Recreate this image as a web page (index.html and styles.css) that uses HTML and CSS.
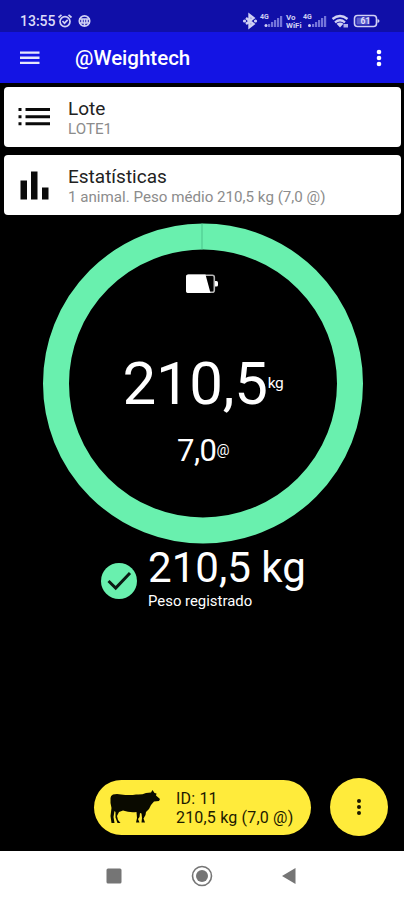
FILE: index.html
```html
<!DOCTYPE html>
<html lang="pt-BR">
<head>
    <meta charset="UTF-8">
    <meta name="viewport" content="width=device-width, initial-scale=1.0">
    <title>@Weightech</title>
    <link rel="stylesheet" href="styles.css">
</head>
<body>
  <div class="screen">
    <!-- Status bar -->
    <div class="status-bar">
        <span class="clock">13:55</span>
        <svg class="status-left" width="36" height="16" viewBox="0 0 36 16" fill="none" stroke="#d0d0f4" stroke-width="1.7">
            <circle cx="8" cy="8.600" r="5"/>
            <path d="M1.500 4.500L4.500 1.800M14.500 4.500L11.500 1.800M5.500 8l2 2.200 3.200-3.400"/>
            <circle cx="27.500" cy="8" r="5.200"/>
            <path d="M22 6h11M22 10h11M27.500 6v7M25 6v4M30 6v4"/>
        </svg>
        <svg class="status-right" width="138" height="18" viewBox="0 0 138 18">
            <path d="M4 6l7.500 6-4 3v-12l4 3L4 12" fill="none" stroke="#d0d0f4" stroke-width="2.400"/>
            <g fill="#d0d0f4">
                <circle cx="2.500" cy="9" r="1.600"/>
                <circle cx="13.500" cy="9" r="1.600"/>
                <text class="tiny" x="18" y="7">4G</text>
                <text class="tiny vo" x="44" y="8">Vo</text>
                <text class="tiny vo" x="44" y="15.500" textLength="15.500" lengthAdjust="spacingAndGlyphs">WiFi</text>
                <text class="tiny" x="61" y="7">4G</text>
                <circle cx="24" cy="13.500" r="1.500"/>
                <circle cx="67.500" cy="13.500" r="1.500"/>
            </g>
            <g fill="#7474da">
                <path d="M26 12h2.200v3H26zM29 10h2.200v5H29zM32 8h2.200v7H32zM35 6h2.200v9H35zM38 4h2.200v11H38z"/>
                <path d="M70 12h2.200v3H70zM73 10h2.200v5H73zM76 8h2.200v7H76zM79 6h2.200v9H79zM82 4h2.200v11H82z"/>
            </g>
            <g fill="none" stroke="#d0d0f4" stroke-width="2.300">
                <path d="M90.500 7q7.500-6 15 0M93 10.300q5-4 10 0"/>
                <rect x="112.500" y="3.500" width="22" height="11" rx="3" stroke-width="1.600"/>
            </g>
            <path d="M94.500 11.800q3.500-2.600 7 0L98 15.500z" fill="#d0d0f4"/>
            <path d="M101.500 12h4.500v3.500h-4.500z" fill="#b0b0ea"/>
            <path d="M135.500 7q2 .5 2 2t-2 2z" fill="#d0d0f4"/>
            <rect x="114.500" y="5.500" width="13" height="7" fill="#5c5ccb"/>
            <text class="level" x="118.500" y="12.200" fill="#e0e0fa">61</text>
        </svg>
    </div>

    <!-- App bar -->
    <div class="app-bar">
        <svg class="menu" width="20" height="14" viewBox="0 0 20 14" fill="#e6e6fb">
            <path d="M0 .5h19.500v2.300H0zM0 5.600h19.500v2.300H0zM0 10.800h19.500v2.300H0z"/>
        </svg>
        <h1>@Weightech</h1>
        <svg class="more" width="6" height="18" viewBox="0 0 6 18" fill="#fff">
            <circle cx="3" cy="3" r="2.300"/>
            <circle cx="3" cy="9" r="2.300"/>
            <circle cx="3" cy="15" r="2.300"/>
        </svg>
    </div>

    <!-- Cards -->
    <div class="cards">
        <div class="card">
            <svg width="32" height="32" viewBox="0 0 32 32" fill="#0a0a0a">
                <path d="M.500 7h3v3h-3zM.500 14.200h3v3h-3zM.500 21.200h3v3h-3zM7.500 7h24.500v3H7.500zM7.500 14.200h24.500v3H7.500zM7.500 21.200h24.500v3H7.500z"/>
            </svg>
            <div class="card-text">
                <h2>Lote</h2>
                <p>LOTE1</p>
            </div>
        </div>
        <div class="card">
            <svg width="32" height="32" viewBox="0 0 32 32" fill="#0a0a0a">
                <path d="M2.500 11.500h6.500v19H2.500zM13 2.500h6.500v28H13zM24 18.500h6.500v12H24z"/>
            </svg>
            <div class="card-text">
                <h2>Estatísticas</h2>
                <p>1 animal. Peso médio 210,5 kg (7,0 @)</p>
            </div>
        </div>
    </div>

    <!-- Scale reading -->
    <svg class="ring" width="320" height="321" viewBox="0 0 320 321">
        <circle cx="160" cy="160.500" r="147" fill="none" stroke="#69f0ae" stroke-width="26"/>
        <path d="M159 .5v26" stroke="#4cc48c"/>
    </svg>
    <div class="reading">
        <svg class="battery" width="32" height="20" viewBox="0 0 32 20">
            <rect x=".8" y="1.300" width="27.500" height="17" rx="2" fill="none" stroke="#b5b5b5" stroke-width="1.600"/>
            <path d="M2 .5h17.500l5 18.500H2q-2 0-2-2v-14.500q0-2 2-2z" fill="#fff"/>
            <path d="M29 7h1.500q1.500 0 1.500 1.500v2.500q0 1.500-1.500 1.500H29z" fill="#fff"/>
        </svg>
        <div class="weight">210,5<span>kg</span></div>
        <div class="arroba">7,0<span>@</span></div>
    </div>

    <!-- Registered weight -->
    <div class="registered">
        <svg class="check" width="36" height="36" viewBox="0 0 36 36">
            <circle cx="18" cy="18" r="18" fill="#69f0ae"/>
            <path d="M7.500 18l7.200 7L29 10" fill="none" stroke="#0a1a12" stroke-width="3"/>
        </svg>
        <div>
            <div class="registered-value">210,5 kg</div>
            <div class="registered-label">Peso registrado</div>
        </div>
    </div>

    <!-- Animal and actions -->
    <div class="actions">
        <div class="animal">
            <svg width="50" height="34" viewBox="0 0 50 34" fill="#0a0a00">
                <path d="M3 4.500Q7 3.500 11 4.500Q20 5.500 26 4.500Q32 5 36 3L41 2.500L42.500 0L44.500 3L46.500 3.500L46 5.500L50 9L49 11L44 11.500L41 15L39 19L36 22L35.500 25L33.500 28.500L35 32.500H31.500L32 28L31.500 23.500L30 23L29.500 27L28 29L29.500 32.500H26L27 28L26.500 22Q20 23 13 20.500L9 22L7 26L8 30L10.500 33H7.500L5.500 27.500V22L4.500 21L3.500 27L4.500 33H1.500L.500 26L1.500 18L.500 13V8Q.500 5.500 3 4.500z"/>
            </svg>
            <div class="animal-text">ID: 11<br>210,5 kg (7,0 @)</div>
        </div>
        <div class="fab">
            <svg width="6" height="18" viewBox="0 0 6 18" fill="#1a1800">
                <circle cx="3" cy="3" r="2"/>
                <circle cx="3" cy="9" r="2"/>
                <circle cx="3" cy="15" r="2"/>
            </svg>
        </div>
    </div>

    <!-- System navigation -->
    <div class="nav-bar">
        <svg width="16" height="16" viewBox="0 0 16 16"><rect x=".5" y=".5" width="15" height="15" rx="1.500" fill="#757575"/></svg>
        <svg width="22" height="22" viewBox="0 0 22 22">
            <circle cx="11" cy="11" r="9.500" fill="none" stroke="#757575" stroke-width="1.600"/>
            <circle cx="11" cy="11" r="6" fill="#757575"/>
        </svg>
        <svg width="16" height="18" viewBox="0 0 16 18"><path d="M14.500 1v16L1 9z" fill="#757575"/></svg>
    </div>
  </div>
</body>
</html>
```
FILE: styles.css
```css
body {
    margin: 0;
    background: #000;
    font-family: Roboto, sans-serif;
}

h1, h2, p {
    margin: 0;
    font-weight: 400;
}

svg {
    display: block;
    flex: none;
}

.screen {
    display: grid;
    grid-template-rows: 32px 51px 132px 329px auto 1fr 49px;
    width: 404px;
    height: 900px;
    overflow: hidden;
    background: #000;
}

.status-bar {
    display: flex;
    align-items: center;
    box-sizing: border-box;
    padding: 10px 24px 0 20px;
    background: #100fa8;
    color: #dcdcf8;
}
.clock {
    width: 37px;
    font-size: 14px;
    font-weight: 500;
}
.status-right {
    margin-left: auto;
}
.tiny {
    font-size: 7px;
    font-weight: 700;
}
.vo {
    font-size: 8px;
}
.level {
    font-size: 8.5px;
    font-weight: 700;
}

.app-bar {
    display: flex;
    align-items: center;
    box-sizing: border-box;
    padding: 0 22px 0 20px;
    background: #1414e4;
    color: #fff;
}
.app-bar h1 {
    margin-left: 35px;
    font-size: 20.5px;
    font-weight: 500;
}
.more {
    margin-left: auto;
}

.cards {
    display: flex;
    flex-direction: column;
    gap: 8px;
    padding: 4px 3px 0 4px;
}
.card {
    display: flex;
    align-items: center;
    gap: 18px;
    box-sizing: border-box;
    height: 60px;
    padding-left: 14px;
    border-radius: 4px;
    background: #fff;
}
.card h2 {
    color: #222;
    font-size: 19px;
    line-height: 23px;
}
.card p {
    color: #8c8c8c;
    font-size: 15.15px;
    line-height: 18px;
}

/* the ring and the reading share one grid row */
.ring, .reading {
    grid-row: 4;
    grid-column: 1;
}
.ring {
    margin: 7.5px 0 0 42.5px;
}
.reading {
    display: flex;
    flex-direction: column;
    align-items: center;
    padding: 59px 0 0 2px;
    color: #fff;
}
.battery {
    margin-right: 2px;
}
.weight, .arroba {
    display: flex;
    align-items: center;
}
.weight {
    margin-top: 55px;
    font-size: 60px;
    line-height: 70px;
    letter-spacing: -.3px;
}
.weight span {
    font-size: 15.5px;
    margin-top: -3px;
}
.arroba {
    margin-top: 14px;
    font-size: 31px;
    line-height: 36px;
    letter-spacing: -.5px;
}
.arroba span {
    font-size: 14.5px;
}

.registered {
    display: flex;
    align-items: center;
    gap: 11px;
    padding-left: 101px;
    color: #fff;
}
.check {
    margin-top: 7px;
}
.registered-value {
    font-size: 42.1px;
    line-height: 48px;
}
.registered-label {
    font-size: 14.9px;
    line-height: 18px;
}

.actions {
    display: flex;
    align-items: center;
    align-self: end;
    gap: 19px;
    padding: 0 15px 15px 94px;
}
.animal {
    display: flex;
    align-items: center;
    gap: 16px;
    box-sizing: border-box;
    width: 217px;
    height: 55px;
    padding-left: 16px;
    border-radius: 28px;
    background: #ffeb3b;
    color: #1c1a00;
    font-size: 16px;
    line-height: 19px;
    letter-spacing: .18px;
}
.animal-text {
    padding-top: 2px;
}
.fab {
    display: flex;
    align-items: center;
    justify-content: center;
    width: 58px;
    height: 58px;
    border-radius: 50%;
    background: #ffeb3b;
}

.nav-bar {
    display: flex;
    align-items: center;
    justify-content: space-between;
    box-sizing: border-box;
    padding: 0 107px 0 106px;
    background: #fff;
}
```
